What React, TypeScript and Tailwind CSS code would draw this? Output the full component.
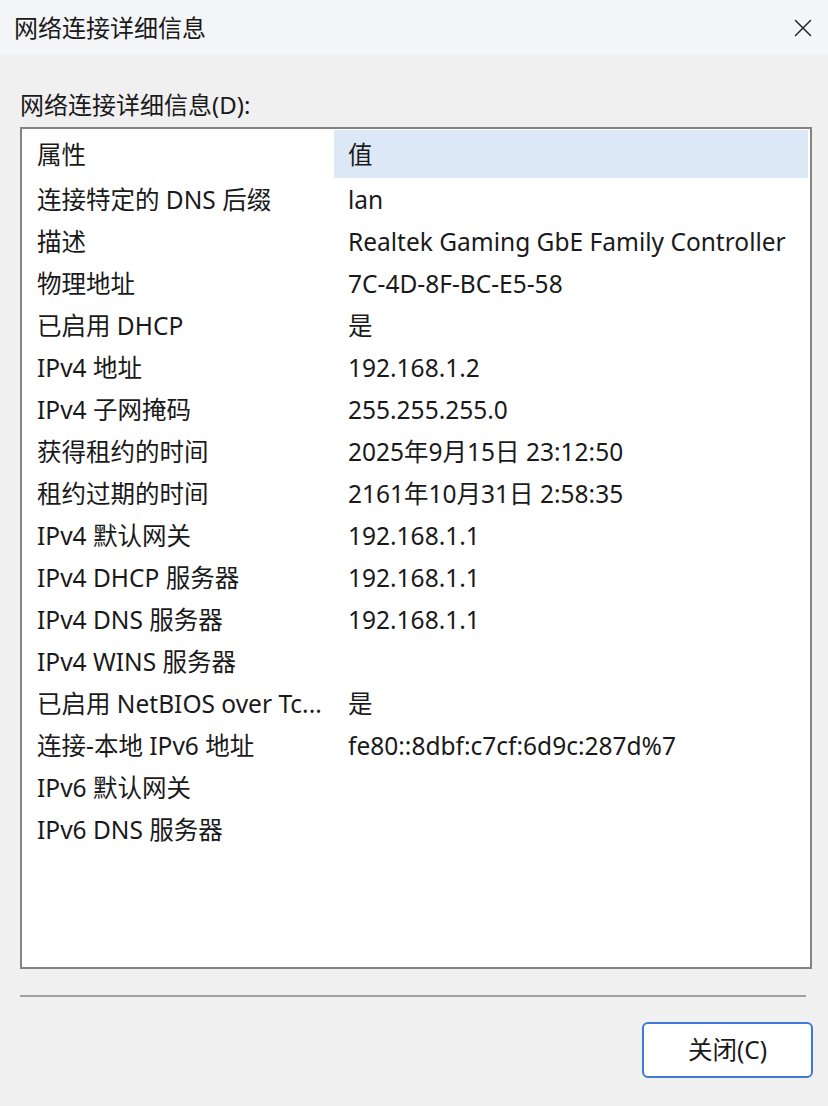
import { X } from 'lucide-react';

const rows: [string, string][] = [
  ['连接特定的 DNS 后缀', 'lan'],
  ['描述', 'Realtek Gaming GbE Family Controller'],
  ['物理地址', '7C-4D-8F-BC-E5-58'],
  ['已启用 DHCP', '是'],
  ['IPv4 地址', '192.168.1.2'],
  ['IPv4 子网掩码', '255.255.255.0'],
  ['获得租约的时间', '2025年9月15日 23:12:50'],
  ['租约过期的时间', '2161年10月31日 2:58:35'],
  ['IPv4 默认网关', '192.168.1.1'],
  ['IPv4 DHCP 服务器', '192.168.1.1'],
  ['IPv4 DNS 服务器', '192.168.1.1'],
  ['IPv4 WINS 服务器', ''],
  ['已启用 NetBIOS over Tc...', '是'],
  ['连接-本地 IPv6 地址', 'fe80::8dbf:c7cf:6d9c:287d%7'],
  ['IPv6 默认网关', ''],
  ['IPv6 DNS 服务器', ''],
];

export default function App() {
  return (
    <div
      className="w-[828px] h-[1106px] bg-[#f0f0f0] text-[#1a1a1a] flex flex-col"
      style={{ fontFamily: '"Noto Sans", "Noto Sans CJK SC", sans-serif' }}
    >
      <div className="h-[55px] bg-[#f4f5f7] flex items-center justify-between pl-[14px] pr-[10px]">
        <span className="text-[24px] leading-none">网络连接详细信息</span>
        <X size={30} strokeWidth={1.2} className="text-[#222]" />
      </div>

      <div className="flex flex-col px-[20px] pt-[35px]">
        <div className="text-[24px] leading-[30px] mb-[7px]">网络连接详细信息(D):</div>

        <div className="h-[842px] w-[792px] border-2 border-[#838383] bg-white pt-[1px] pr-[2px]">
          <div className="flex h-[48px] items-center text-[24.5px] leading-none">
            <div className="w-[312px] pl-[15px] pt-[2px]">属性</div>
            <div className="flex-1 h-full flex items-center bg-[#dce8f5] pl-[14px] pt-[2px]">值</div>
          </div>
          {rows.map(([k, v], i) => (
            <div key={i} className="flex h-[42px] items-center pt-[3px] text-[24.5px] leading-none whitespace-nowrap">
              <div className="w-[312px] pl-[15px]">{k}</div>
              <div className="flex-1 pl-[14px]">{v}</div>
            </div>
          ))}
        </div>

        <div className="mt-[26px] w-[786px] h-[2px] bg-[#a0a0a0]" />

        <div className="flex justify-end mt-[25px]">
          <button className="w-[171px] h-[56px] mr-[-5px] rounded-[6px] border-2 border-[#3d7ad6] bg-white text-[24.5px] leading-none">
            关闭(C)
          </button>
        </div>
      </div>
    </div>
  );
}
